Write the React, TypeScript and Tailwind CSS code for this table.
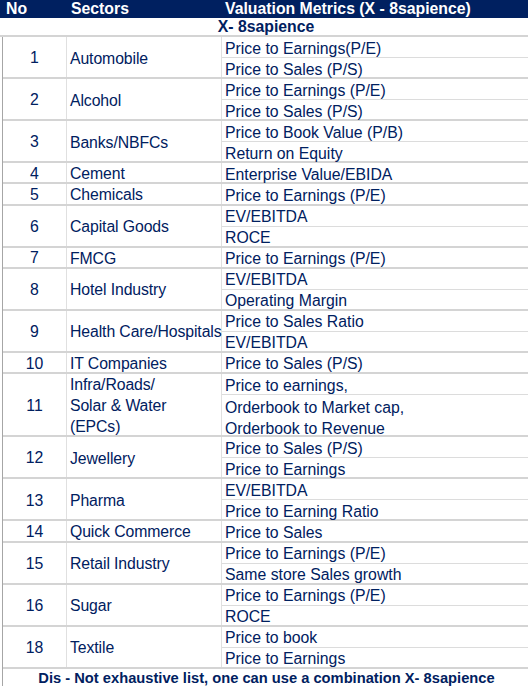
import React from "react";

type Group = { no: string; sector: React.ReactNode; metrics: string[][] };

// each inner array is one cell; more than one string = wrapped lines in the same cell
const GROUPS: Group[] = [
  { no: "1", sector: "Automobile", metrics: [["Price to Earnings(P/E)"], ["Price to Sales (P/S)"]] },
  { no: "2", sector: "Alcohol", metrics: [["Price to Earnings (P/E)"], ["Price to Sales (P/S)"]] },
  { no: "3", sector: "Banks/NBFCs", metrics: [["Price to Book Value (P/B)"], ["Return on Equity"]] },
  { no: "4", sector: "Cement", metrics: [["Enterprise Value/EBIDA"]] },
  { no: "5", sector: "Chemicals", metrics: [["Price to Earnings (P/E)"]] },
  { no: "6", sector: "Capital Goods", metrics: [["EV/EBITDA"], ["ROCE"]] },
  { no: "7", sector: "FMCG", metrics: [["Price to Earnings (P/E)"]] },
  { no: "8", sector: "Hotel Industry", metrics: [["EV/EBITDA"], ["Operating Margin"]] },
  { no: "9", sector: "Health Care/Hospitals", metrics: [["Price to Sales Ratio"], ["EV/EBITDA"]] },
  { no: "10", sector: "IT Companies", metrics: [["Price to Sales (P/S)"]] },
  {
    no: "11",
    sector: (
      <>
        Infra/Roads/
        <br />
        Solar &amp; Water
        <br />
        (EPCs)
      </>
    ),
    metrics: [["Price to earnings,"], ["Orderbook to Market cap,", "Orderbook to Revenue"]],
  },
  { no: "12", sector: "Jewellery", metrics: [["Price to Sales (P/S)"], ["Price to Earnings"]] },
  { no: "13", sector: "Pharma", metrics: [["EV/EBITDA"], ["Price to Earning Ratio"]] },
  { no: "14", sector: "Quick Commerce", metrics: [["Price to Sales"]] },
  { no: "15", sector: "Retail Industry", metrics: [["Price to Earnings (P/E)"], ["Same store Sales growth"]] },
  { no: "16", sector: "Sugar", metrics: [["Price to Earnings (P/E)"], ["ROCE"]] },
  { no: "18", sector: "Textile", metrics: [["Price to book"], ["Price to Earnings"]] },
];

// spreadsheet rows come out a hair over 21px
const groupHeight: Record<number, string> = {
  1: "h-[21.07px]",
  2: "h-[42.14px]",
  3: "h-[63.21px]",
};

export default function App() {
  return (
    <div className="w-[528px] h-[686px] overflow-hidden bg-white text-[15.8px] text-[#002060] font-['Liberation_Sans',Arial,sans-serif]">
      {/* header */}
      <div className="flex h-[18px] bg-[#002060] text-white font-bold leading-[18px] whitespace-nowrap">
        <div className="w-[67px] pl-[6px]">No</div>
        <div className="w-[155px] pl-[4px]">Sectors</div>
        <div className="flex-1 pl-[3px]">Valuation Metrics (X - 8sapience)</div>
      </div>

      <div className="h-[19px] border-b-2 border-[#d4d4d4] text-center font-bold leading-[17px] pl-[4px]">
        X- 8sapience
      </div>

      <div className="ml-[2px] border-l border-[#a6a6a6]">
        {GROUPS.map((g) => {
          const lines = g.metrics.reduce((n, c) => n + c.length, 0);
          return (
            <div key={g.no} className={`flex box-border border-b-2 border-[#d4d4d4] ${groupHeight[lines]}`}>
              <div className="w-[64px] shrink-0 border-r border-[#e0e0e0] flex items-center justify-center pt-[2px]">
                {g.no}
              </div>
              <div className="w-[155px] shrink-0 border-r border-[#e0e0e0] flex items-center pl-[3px] pt-[2px] leading-[21px] whitespace-nowrap tracking-[-0.1px]">
                {g.sector}
              </div>
              <div className="flex-1 flex flex-col">
                {g.metrics.map((cell, i) => {
                  const last = i === g.metrics.length - 1;
                  const wrapped = cell.length > 1;
                  return (
                    <div
                      key={i}
                      className={`pl-[3px] pt-[1.5px] whitespace-nowrap overflow-visible ${
                        wrapped ? "leading-[21px]" : "leading-[20px]"
                      } ${
                        last ? "flex-1" : `border-b border-[#dcdcdc] ${wrapped ? "h-[42.14px]" : "h-[21.07px]"}`
                      }`}
                    >
                      {cell.map((t) => (
                        <div key={t}>{t}</div>
                      ))}
                    </div>
                  );
                })}
              </div>
            </div>
          );
        })}

        <div className="h-[17px] text-center text-[14.7px] font-bold leading-[19px] whitespace-nowrap pl-[2px]">
          Dis - Not exhaustive list, one can use a combination X- 8sapience
        </div>
      </div>
    </div>
  );
}
